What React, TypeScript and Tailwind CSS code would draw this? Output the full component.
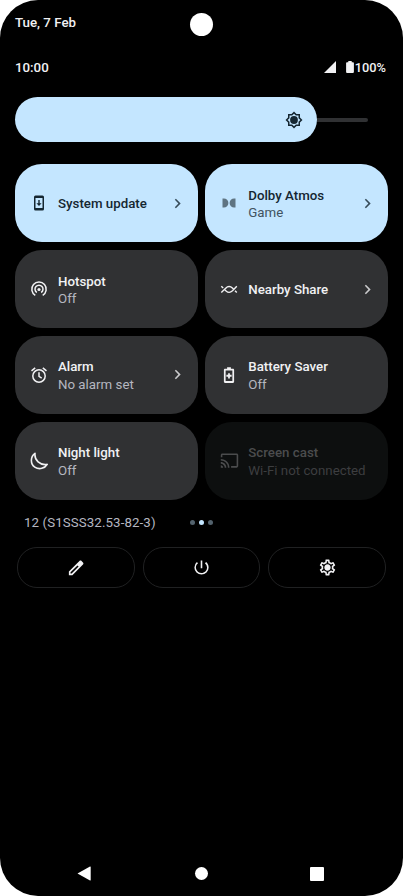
import type { ReactNode } from "react";
import {
  MdOutlineCast,
  MdOutlineSettings,
  MdPowerSettingsNew,
  MdChevronRight,
} from "react-icons/md";

type Tile = {
  title: string;
  status?: string;
  icon: ReactNode;
  state: "on" | "off" | "disabled";
  arrow?: boolean;
};

const tiles: Tile[] = [
  {
    title: "System update",
    state: "on",
    arrow: true,
    icon: (
      <svg className="w-4 h-4" viewBox="0 0 16 16" fill="currentColor">
        <path
          fillRule="evenodd"
          d="M4.500.500h7a1.500 1.500 0 0 1 1.500 1.500v12a1.500 1.500 0 0 1-1.500 1.500h-7A1.500 1.500 0 0 1 3 14V2A1.500 1.500 0 0 1 4.500.500zM4.500 3v10h7V3zM7.300 5h1.400v3.300h1.900L8 11 5.400 8.300h1.900z"
        />
      </svg>
    ),
  },
  {
    title: "Dolby Atmos",
    status: "Game",
    state: "on",
    arrow: true,
    icon: (
      <svg
        className="w-[18px] h-[18px] text-[#5f7482]"
        viewBox="0 0 18 18"
        fill="currentColor"
      >
        <path d="M2.500 4.500h1.400a4.500 4.500 0 0 1 0 9H2.500zM15.500 4.500h-1.400a4.500 4.500 0 0 0 0 9h1.400z" />
      </svg>
    ),
  },
  {
    title: "Hotspot",
    status: "Off",
    state: "off",
    icon: (
      <svg
        className="w-[18px] h-[18px]"
        viewBox="0 0 18 18"
        fill="none"
        stroke="currentColor"
        strokeWidth="1.500"
      >
        <path d="M5.300 15.400a7.200 7.200 0 1 1 7.400 0M6.800 12.500a4 4 0 1 1 4.400 0" />
        <circle cx="9" cy="9.500" r="1.600" fill="currentColor" stroke="none" />
      </svg>
    ),
  },
  {
    title: "Nearby Share",
    state: "off",
    arrow: true,
    icon: (
      <svg
        className="w-[18px] h-[18px]"
        viewBox="0 0 18 18"
        fill="none"
        stroke="currentColor"
        strokeWidth="1.400"
      >
        <path d="M1.300 12.600L5.700 8.200C7.900 6 10.300 6 12.400 8.100L14 9.700M15 10.700L16.800 12.600M1.300 6.200L3.200 8.100M4.400 9.300L6.100 11C8.200 12.900 10.400 12.800 12.500 10.800L16.800 6.200" />
      </svg>
    ),
  },
  {
    title: "Alarm",
    status: "No alarm set",
    state: "off",
    arrow: true,
    icon: (
      <svg
        className="w-[18px] h-[18px]"
        viewBox="0 0 18 18"
        fill="none"
        stroke="currentColor"
        strokeWidth="1.500"
      >
        <circle cx="9" cy="10" r="6.200" />
        <path d="M9 6.200v4.200l2.700 1.800M1.500 4.800L5.200 1.800M16.500 4.800L12.800 1.800" />
      </svg>
    ),
  },
  {
    title: "Battery Saver",
    status: "Off",
    state: "off",
    icon: (
      <svg className="w-[18px] h-[18px]" viewBox="0 0 24 24" fill="currentColor">
        <path
          fillRule="evenodd"
          d="M9.500 1.500h5v2h2.800c.8 0 1.500.6 1.500 1.400v16.200c0 .8-.7 1.400-1.500 1.400H6.700c-.8 0-1.500-.6-1.500-1.400V4.900c0-.8.7-1.400 1.500-1.400h2.800zM7.500 6v14h9V6zm3.300 3.500h2.400v2.300h2.300v2.400h-2.300v2.300h-2.400v-2.300H8.500v-2.400h2.300z"
        />
      </svg>
    ),
  },
  {
    title: "Night light",
    status: "Off",
    state: "off",
    icon: (
      <svg
        className="w-[18px] h-[18px]"
        viewBox="0 0 18 18"
        fill="none"
        stroke="currentColor"
        strokeWidth="1.600"
        strokeLinejoin="round"
      >
        <path d="M5 1.300C.200 4.800.200 12 4.800 15.100C9.200 18 15 16.400 17.200 12.400C10 13.600 4.200 8.200 5 1.300z" />
      </svg>
    ),
  },
  {
    title: "Screen cast",
    status: "Wi-Fi not connected",
    state: "disabled",
    icon: <MdOutlineCast className="w-[19px] h-[19px] shrink-0" />,
  },
];

const tileColors = {
  on: "bg-[#c4e6ff] text-[#152631]",
  off: "bg-[#303133] text-[#f1f1f3]",
  disabled: "bg-[#0d0f0f] text-[#4b4c4d]",
};

const statusColors = {
  on: "text-[#415360]",
  off: "text-[#b5b7c0]",
  disabled: "text-[#3d3e40]",
};

function QuickTile({ tile }: { tile: Tile }) {
  return (
    <button
      className={`flex h-[78.400px] items-center rounded-[27px] pl-[15px] pr-[11px] text-left ${tileColors[tile.state]}`}
    >
      <span className="flex w-[18px] justify-center shrink-0">{tile.icon}</span>
      <span className="ml-[10px] flex-1 whitespace-nowrap pt-[2px] text-[13.300px] leading-[17.500px]">
        <span className="block font-medium">{tile.title}</span>
        {tile.status && (
          <span className={`block ${statusColors[tile.state]}`}>
            {tile.status}
          </span>
        )}
      </span>
      {tile.arrow && (
        <MdChevronRight className="w-[19px] h-[19px] shrink-0 opacity-80" />
      )}
    </button>
  );
}

export default function App() {
  return (
    <div className="bg-white">
      <div className="relative flex h-[896px] w-[403px] flex-col overflow-hidden rounded-[38px] bg-black font-['Roboto',sans-serif] text-[#f1f1f3]">
        {/* Camera hole */}
        <div className="absolute left-[190px] top-[13px] h-[23px] w-[23px] rounded-full bg-white" />

        {/* Status bar */}
        <header className="px-[15px] pt-[14px] text-[13.300px] font-medium">
          <div className="h-[18px] leading-[18px]">Tue, 7 Feb</div>
          <div className="mt-[27px] flex h-[18px] items-center justify-between leading-[18px]">
            <span>10:00</span>
            <div className="flex items-center pr-[2px]">
              <svg className="mr-[10px] mb-[2px] h-3 w-3" viewBox="0 0 12 12" fill="currentColor">
                <path d="M12 0v12H0z" />
              </svg>
              <svg className="mr-[1px] mb-[3px] h-3 w-2" viewBox="0 0 8 12" fill="currentColor">
                <path d="M2.300 0h3.400v1.200H7c.5 0 .9.400.9.900v9c0 .5-.4.900-.9.900H1c-.5 0-.9-.4-.9-.9v-9c0-.5.400-.9.900-.9h1.300z" />
              </svg>
              <span className="text-[12.800px]">100%</span>
            </div>
          </div>
        </header>

        {/* Brightness slider */}
        <div className="mt-5 ml-[15px] flex h-[45px] items-center">
          <div className="flex h-[45px] w-[301.500px] items-center justify-end rounded-full bg-[#c4e6ff] pr-[13.500px] text-[#152631]">
            <svg className="h-[18px] w-[18px]" viewBox="0 0 24 24" fill="currentColor">
              <path
                fillRule="evenodd"
                d="M20 8.690V4h-4.690L12 .690 8.690 4H4v4.690L.690 12 4 15.310V20h4.690L12 23.310 15.310 20H20v-4.690L23.310 12zM18 14.480V18h-3.520L12 20.480 9.520 18H6v-3.520L3.520 12 6 9.520V6h3.520L12 3.520 14.480 6H18v3.520L20.480 12z"
              />
              <circle cx="12" cy="12" r="5.200" />
            </svg>
          </div>
          <div className="h-1 w-[51px] rounded-r-full bg-[#303133]" />
        </div>

        {/* Tiles */}
        <div className="mt-[22px] ml-[15px] grid w-[373px] grid-cols-2 gap-x-[7.500px] gap-y-[7.500px]">
          {tiles.map((tile) => (
            <QuickTile key={tile.title} tile={tile} />
          ))}
        </div>

        {/* Build number and page dots */}
        <div className="mt-[14px] flex h-[18px] items-center pl-6 text-[13.300px] text-[#b5b7c0]">
          <span className="w-[166px] tracking-[0.100px]">12 (S1SSS32.53-82-3)</span>
          <div className="mb-px flex gap-1">
            <i className="h-[5px] w-[5px] rounded-full bg-[#53626d]" />
            <i className="h-[5px] w-[5px] rounded-full bg-[#c4e6ff]" />
            <i className="h-[5px] w-[5px] rounded-full bg-[#53626d]" />
          </div>
        </div>

        {/* Footer actions */}
        <div className="mt-[15px] ml-[17px] grid w-[369px] grid-cols-3 gap-2">
          <button className="flex h-[41px] items-center justify-center rounded-[20px] border border-[#202122]">
            <svg className="h-[18px] w-[18px]" viewBox="0 0 24 24" fill="currentColor">
              <path
                fillRule="evenodd"
                d="M2.500 16.800V21.500h4.700L21.300 7.400c.8-.8.8-2 0-2.800l-1.900-1.900c-.8-.8-2-.8-2.800 0zM4.700 17.800L14 8.500l1.500 1.500-9.300 9.300H4.700z"
              />
            </svg>
          </button>
          <button className="flex h-[41px] items-center justify-center rounded-[20px] border border-[#202122]">
            <MdPowerSettingsNew className="h-[19px] w-[19px]" />
          </button>
          <button className="flex h-[41px] items-center justify-center rounded-[20px] border border-[#202122]">
            <svg className="h-[19px] w-[19px]" viewBox="0 0 24 24" fill="currentColor">
              <MdOutlineSettings size={24} />
              <circle cx="12" cy="12" r="3.200" />
            </svg>
          </button>
        </div>

        {/* Navigation bar */}
        <nav className="mt-auto flex h-[45px] items-center justify-between pl-[77px] pr-[79px] text-white">
          <svg className="h-[15px] w-[14px]" viewBox="0 0 14 15" fill="currentColor">
            <path d="M.5 7.500L13 .5q.7-.3.700.400v13.200q0 .7-.7.400z" />
          </svg>
          <div className="ml-[2px] h-[13px] w-[13px] rounded-full bg-white" />
          <div className="h-[14px] w-[14px] rounded-[1px] bg-white" />
        </nav>
      </div>
    </div>
  );
}
